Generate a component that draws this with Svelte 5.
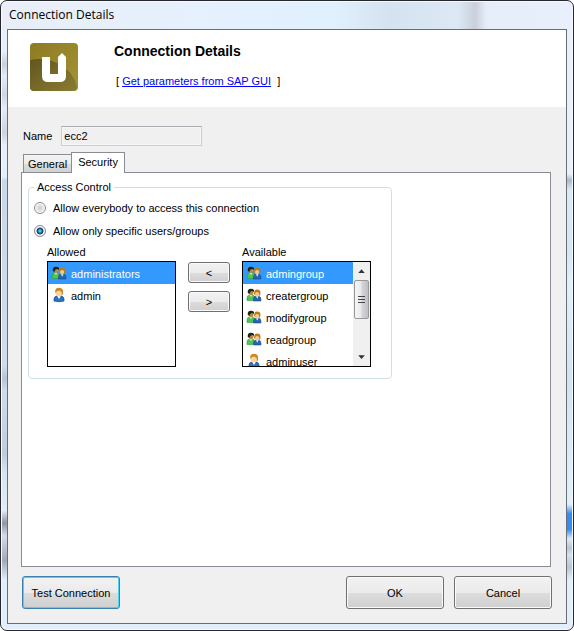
<script>
  let tab = $state('security');
  let access = $state('specific');
  let name = 'ecc2';
  let pickedAllowed = $state('administrators');
  let pickedAvailable = $state('admingroup');

  const allowed = [
    { name: 'administrators', group: true },
    { name: 'admin', group: false }
  ];
  const available = [
    { name: 'admingroup', group: true },
    { name: 'creatergroup', group: true },
    { name: 'modifygroup', group: true },
    { name: 'readgroup', group: true },
    { name: 'adminuser', group: false }
  ];
</script>

{#snippet icon(group)}
  <svg class="icon" viewBox="0 0 16 16" aria-hidden="true">
    {#if group}
      <path d="M1 13.500V11Q1 8.300 3.500 8H6Q9 8.300 9 11V13.500Z" fill="#4cc552" stroke="#2b9a3c" stroke-width=".6" />
      <path d="M3.500 8L5 10L6.500 8Z" fill="#d9f5d9" />
      <ellipse cx="5.200" cy="5.500" rx="2.300" ry="2.800" fill="#b98a45" />
      <path d="M1.800 6Q1.200 1.800 5 1.800Q8.600 1.800 8 5L6.500 4Q4 4 3.400 7Z" fill="#17251a" />
      <path d="M7.500 14V11.700Q7.800 9.500 10 9.200H12.500Q14.900 9.500 14.900 12V14Z" fill="#2467b5" stroke="#174783" stroke-width=".6" />
      <path d="M10 9.200L11.200 11.500L12.500 9.200Z" fill="#fff" />
      <ellipse cx="11" cy="6.500" rx="2.300" ry="2.800" fill="#f4c78d" />
      <path d="M8.300 7.500Q7.300 2.500 11.200 2.500Q15.400 2.500 14.200 8L13.100 9V6L11 4.800L9.200 6V8Z" fill="#bd7915" />
    {:else}
      <path d="M3 14V12Q3.200 9.300 6 9H10Q12.800 9.300 13 12V14Q8 15.500 3 14Z" fill="#2873c5" stroke="#174783" stroke-width=".7" />
      <path d="M6.200 9L8 12L9.800 9Z" fill="#fff" />
      <ellipse cx="7.600" cy="5.800" rx="3" ry="3.700" fill="#ffd39b" />
      <path d="M4.200 5.500Q3.600 .8 8 .8Q13 .8 12 7L10.600 9V5L8 3.600L5.300 4.600V6Z" fill="#c98a22" />
    {/if}
  </svg>
{/snippet}

<div class="window">
  <div class="titlebar">Connection Details</div>
  <main class="client">
    <header>
      <svg class="logo" viewBox="0 0 48 48" aria-hidden="true">
        <defs>
          <linearGradient id="gold" x1="0" y1="0" x2="1" y2="1">
            <stop offset="0" stop-color="#8d7b22" />
            <stop offset="1" stop-color="#a39435" />
          </linearGradient>
          <linearGradient id="wave" x1="0" y1="0" x2="1" y2="1">
            <stop offset="0" stop-color="#62561f" />
            <stop offset="1" stop-color="#8b7c33" />
          </linearGradient>
        </defs>
        <rect width="48" height="48" rx="4" fill="url(#gold)" />
        <path d="M0 17Q16 14 29 21Q43 28 47 44Q46 48 43 48H4Q0 48 0 44Z" fill="url(#wave)" />
        <path d="M12 14H20V31H28V14L32 10L36 14V33Q36 39 30 39H18Q12 39 12 33Z" fill="#fff" />
      </svg>
      <div class="heading">
        <h1>Connection Details</h1>
        <p>[ <a href="#sapgui">Get parameters from SAP GUI</a>&nbsp; ]</p>
      </div>
    </header>

    <form onsubmit={(e) => e.preventDefault()}>
      <div class="name-row">
        <label for="name">Name</label>
        <input id="name" type="text" value={name} readonly />
      </div>

      <div class="tabs" role="tablist">
        <button type="button" role="tab" id="tab-general" class:active={tab === 'general'} aria-selected={tab === 'general'} aria-controls="panel" onclick={() => (tab = 'general')}>General</button>
        <button type="button" role="tab" id="tab-security" class:active={tab === 'security'} aria-selected={tab === 'security'} aria-controls="panel" onclick={() => (tab = 'security')}>Security</button>
      </div>

      <div class="panel" id="panel" role="tabpanel" aria-labelledby={'tab-' + tab}>
        {#if tab === 'security'}
          <fieldset>
            <legend>Access Control</legend>
            <label class="choice"><input type="radio" name="access" value="everybody" bind:group={access} />Allow everybody to access this connection</label>
            <label class="choice"><input type="radio" name="access" value="specific" bind:group={access} />Allow only specific users/groups</label>

            <div class="transfer">
              <div class="column">
                <span id="allowed-label">Allowed</span>
                <div class="listbox">
                  <div class="rows" role="listbox" aria-labelledby="allowed-label">
                    {#each allowed as item}
                      <button type="button" role="option" aria-selected={pickedAllowed === item.name} onclick={() => (pickedAllowed = item.name)}>{@render icon(item.group)}{item.name}</button>
                    {/each}
                  </div>
                </div>
              </div>
              <div class="movers">
                <button type="button" class="push" aria-label="Allow the selected entry">&lt;</button>
                <button type="button" class="push" aria-label="Remove the selected entry">&gt;</button>
              </div>
              <div class="column">
                <span id="available-label">Available</span>
                <div class="listbox">
                  <div class="rows" role="listbox" aria-labelledby="available-label">
                    {#each available as item}
                      <button type="button" role="option" aria-selected={pickedAvailable === item.name} onclick={() => (pickedAvailable = item.name)}>{@render icon(item.group)}{item.name}</button>
                    {/each}
                  </div>
                  <div class="scrollbar" aria-hidden="true">
                    <svg class="arrow" viewBox="0 0 16 18"><path d="M4.500 11L8 7L11.500 11Z" fill="#333" /></svg>
                    <div class="thumb"><i></i><i></i><i></i></div>
                    <svg class="arrow last" viewBox="0 0 16 18"><path d="M4.500 7L8 11L11.500 7Z" fill="#333" /></svg>
                  </div>
                </div>
              </div>
            </div>
          </fieldset>
        {/if}
      </div>

      <footer>
        <button type="button" class="push large default">Test Connection</button>
        <div class="confirm">
          <button type="submit" class="push large">OK</button>
          <button type="button" class="push large">Cancel</button>
        </div>
      </footer>
    </form>
  </main>
</div>

<style>
  :global(body) {
    background: #fff;
  }
  .window,
  .window * {
    box-sizing: border-box;
  }
  .window {
    min-height: 100vh;
    display: flex;
    flex-direction: column;
    padding: 0 6px 6px;
    border: 1px solid #26272e;
    border-radius: 7px;
    /* the glass frame: left edge, right edge, then the base tint */
    background:
      linear-gradient(#e6effa 8%, #c9d1dd 10%, #e2ebf6 12%, #cdd6e2 15%, #e4edf8 17%, #cad3df 21%, #e6effa 23%, #e4eefa 28%, #c9d8e8 28.5%, #cfdceb 58%, #b6c4d6 60%, #cfdceb 62%, #bfccdc 72%, #d8e4f1 75%, #e2ebf6 81%, #8e96a3 83%, #d3dce8 85%, #a1a9b6 89%, #e2effb 92%) left / 7px 100% no-repeat,
      linear-gradient(#e8f0fa 27.5%, #acb8c6 28.5%, #dce8f5 30%, #d6e5f5 40%, #e2effb 45%, #d3e2f2 60%, #e2effb 80%, #338df0 81.5%, #338df0 84%, #dfeaf6 85.500%, #b9c5d3 87%, #d5e1ee 88%, #b9c5d3 90%, #e2effb 92%) right / 7px 100% no-repeat,
      #e2effb;
    box-shadow: inset 0 0 0 1px #f7fbff;
    color: #000;
    font: 11px/14px 'Liberation Sans', Arial, sans-serif;
  }
  .titlebar {
    height: 27px;
    margin: 1px -5px 0;
    padding: 5px 7px;
    border-radius: 6px 6px 0 0;
    background: linear-gradient(90deg, #e9eef7, #e5f1fd 35%, #e1f0fd 58%, #d5e3f0 68%, #dce8f4 80%, #c9d0dc 83%, #e6edf8 85%, #e9f0fb);
    font: 12px/16px 'Open Sans', 'Noto Sans', sans-serif;
  }
  .client {
    flex: 1;
    display: flex;
    flex-direction: column;
    border: 1px solid #676e76;
    background: #f0f0f0;
  }
  header {
    display: flex;
    gap: 36px;
    padding: 13px 22px 16px;
    background: #fff;
  }
  .logo {
    width: 48px;
    height: 48px;
  }
  h1 {
    margin: 0;
    font-size: 14px;
    line-height: 16px;
  }
  p {
    margin: 15px 2px 0;
  }
  a {
    color: #00f;
  }
  form {
    flex: 1;
    display: flex;
    flex-direction: column;
    padding: 19px 15px 14px 13px;
  }
  .name-row {
    display: flex;
    align-items: center;
    gap: 9px;
    padding-left: 2px;
  }
  .name-row input {
    width: 141px;
    height: 20px;
    padding: 0 2px;
    border: 1px solid #c9cdd2;
    border-top-color: #abadb3;
    background: #f0f0f0;
    outline: 1px solid #f7f7f7;
    outline-offset: -2px;
    color: #000;
    font: inherit;
  }
  button {
    font: inherit;
    color: inherit;
  }
  .tabs {
    display: flex;
    align-items: flex-end;
    margin-top: 6px;
    padding-left: 2px;
  }
  .tabs button {
    height: 18px;
    padding: 0 4px;
    border: 1px solid #898c95;
    border-bottom: 0;
    background: linear-gradient(#f3f3f3, #ececec 50%, #dddddd 51%, #d2d2d2);
  }
  .tabs button + button {
    border-left: 0;
  }
  .tabs button.active {
    position: relative;
    height: 21px;
    margin: 0 0 -1px -1px;
    padding: 0 6px 2px;
    border-left: 1px solid #898c95;
    background: #fff;
  }
  .panel {
    flex: 1;
    padding: 7px 6px;
    border: 1px solid #898c95;
    background: #fff;
  }
  fieldset {
    width: 364px;
    max-width: 100%;
    margin: 0;
    padding: 7px 19px 11px 5px;
    border: 1px solid #d0dfe5;
    border-radius: 4px;
  }
  legend {
    padding: 0 3px;
  }
  .choice {
    display: flex;
    align-items: center;
    gap: 7px;
    margin-bottom: 9px;
  }
  .choice input {
    appearance: none;
    width: 12px;
    height: 12px;
    margin: 0;
    border: 1px solid #8b8d90;
    border-radius: 50%;
    background: radial-gradient(circle, #d4d6d8 20%, #e8e9ea 50%, #fafafa 65%);
  }
  .choice input:checked {
    background: radial-gradient(circle closest-side at 50% 50%, #6ed0ef 0 12%, #1b7fae 35%, #0e3e5c 62%, #eef0f2 76%);
  }
  .transfer {
    display: flex;
    gap: 12px;
    padding-left: 13px;
    margin-top: -2px;
  }
  .column {
    width: 129px;
    display: flex;
    flex-direction: column;
    gap: 2px;
  }
  .listbox {
    height: 106px;
    display: flex;
    border: 1px solid #000;
    background: #fff;
    overflow: hidden;
  }
  .rows {
    flex: 1;
    overflow: hidden;
  }
  .rows button {
    width: 100%;
    height: 22px;
    display: flex;
    align-items: center;
    gap: 4px;
    padding: 2px 3px 0;
    border: 0;
    background: #fff;
    text-align: left;
  }
  .rows button[aria-selected='true'] {
    background: #39f;
    color: #fff;
  }
  .icon {
    width: 16px;
    height: 16px;
    margin-top: -2px;
  }
  .scrollbar {
    width: 17px;
    display: flex;
    flex-direction: column;
    background: #f0f0f0;
    padding: 0 1px;
  }
  .arrow {
    width: 15px;
    height: 18px;
  }
  .arrow.last {
    margin-top: auto;
  }
  .thumb {
    height: 39px;
    display: flex;
    flex-direction: column;
    align-items: center;
    justify-content: center;
    gap: 2px;
    border: 1px solid #979797;
    border-radius: 2px;
    background: linear-gradient(90deg, #f5f5f5, #e9e9eb 48%, #d5d6d9 52%, #c0c0c4);
  }
  .thumb i {
    width: 7px;
    height: 1px;
    background: #444;
  }
  .movers {
    display: flex;
    flex-direction: column;
    gap: 8px;
    margin-top: 17px;
  }
  .push {
    width: 42px;
    height: 21px;
    padding: 0;
    border: 1px solid #707070;
    border-radius: 3px;
    background: linear-gradient(#f2f2f2, #ebebeb 50%, #dddddd 51%, #cfcfcf);
    box-shadow: inset 0 0 0 1px #fafafa;
  }
  .large {
    width: 98px;
    height: 33px;
  }
  .default {
    border-color: #3c7fb1;
    box-shadow: inset 0 0 0 1px #46d4f8;
  }
  footer {
    display: flex;
    justify-content: space-between;
    margin: 9px -1px 0 1px;
  }
  .confirm {
    display: flex;
    gap: 10px;
  }
</style>
